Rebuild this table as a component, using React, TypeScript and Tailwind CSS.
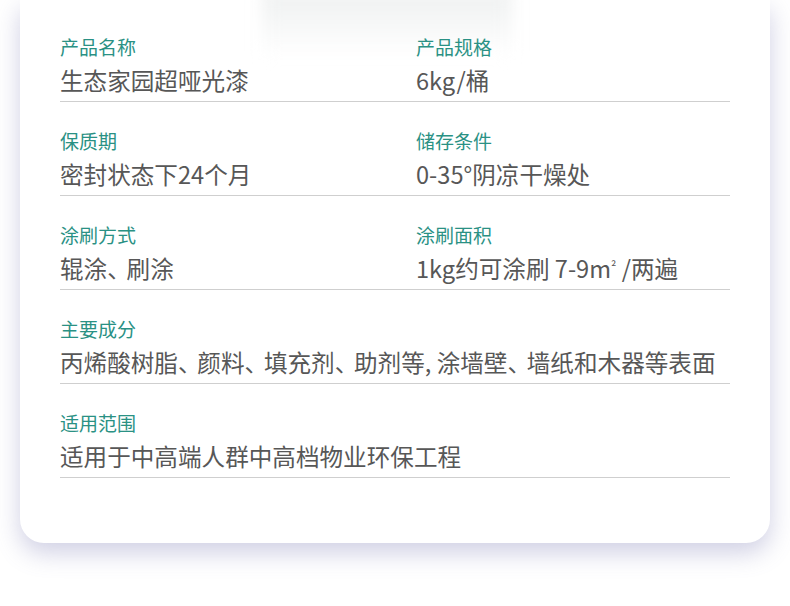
type Item = { label: string; value: React.ReactNode };

// ideographic comma drawn a little narrower, as in the reference
function tight(text: string) {
  return text.split("、").flatMap((part, i) =>
    i === 0
      ? [part]
      : [
          <span key={i} className="tracking-[-0.18em]">
            、
          </span>,
          part,
        ],
  );
}

const pairs: [Item, Item][] = [
  [
    { label: "产品名称", value: "生态家园超哑光漆" },
    { label: "产品规格", value: "6kg/桶" },
  ],
  [
    { label: "保质期", value: "密封状态下24个月" },
    { label: "储存条件", value: "0-35°阴凉干燥处" },
  ],
  [
    { label: "涂刷方式", value: tight("辊涂、刷涂") },
    {
      label: "涂刷面积",
      value: (
        <>
          1kg约可涂刷 7-9m<sup className="text-[13px]">²</sup> /两遍
        </>
      ),
    },
  ],
];

const singles: Item[] = [
  {
    label: "主要成分",
    value: tight("丙烯酸树脂、颜料、填充剂、助剂等, 涂墙壁、墙纸和木器等表面"),
  },
  { label: "适用范围", value: "适用于中高端人群中高档物业环保工程" },
];

function Cell({ item }: { item: Item }) {
  return (
    <div>
      <div className="h-[26px] text-[19px] leading-[26px] text-[#2a9184]">
        {item.label}
      </div>
      <div className="mt-1 h-8 whitespace-nowrap text-[23.6px] leading-8 text-[#575757]">
        {item.value}
      </div>
    </div>
  );
}

export default function App() {
  return (
    <div
      className="relative h-[606px] w-[790px] overflow-hidden bg-white"
      style={{ fontFamily: '"Noto Sans CJK SC", "Noto Sans", sans-serif' }}
    >
      <div className="relative mx-5 rounded-b-[24px] bg-white pb-[65px] pl-10 pr-10 shadow-[0_10px_24px_rgba(110,110,170,0.32)]">
        {/* faded bottom of the product picture */}
        <div className="pointer-events-none absolute left-[242px] top-[-10px] h-[66px] w-[250px] bg-gradient-to-b from-[#eef0f0] via-[#f6f7f7] to-white blur-[8px]" />
        <div className="relative">
          {pairs.map(([a, b], i) => (
            <div
              key={a.label}
              className={`grid grid-cols-[356px_1fr] border-b border-[#cfcfcf] pb-[5px] ${
                i === 0 ? "pt-[34px]" : "pt-[26px]"
              }`}
            >
              <Cell item={a} />
              <Cell item={b} />
            </div>
          ))}
          {singles.map((s) => (
            <div
              key={s.label}
              className="border-b border-[#cfcfcf] pb-[5px] pt-[26px]"
            >
              <Cell item={s} />
            </div>
          ))}
        </div>
      </div>
    </div>
  );
}
